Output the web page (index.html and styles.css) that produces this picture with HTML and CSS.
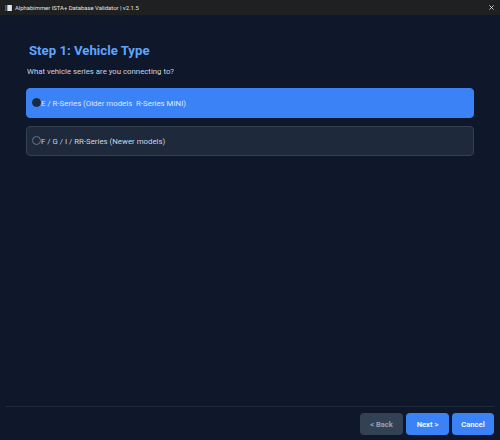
FILE: index.html
```html
<!DOCTYPE html>
<html lang="en">
<head>
<meta charset="utf-8">
<title>Alphabimmer ISTA+ Database Validator</title>
<link rel="stylesheet" href="styles.css">
</head>
<body>
<div class="window">
  <header class="titlebar">
    <svg class="app-icon" viewBox="0 0 9 8" aria-hidden="true"><rect width="9" height="8" fill="#dfe6ee"/><rect x="0" y="0" width="3" height="8" fill="#3b4656"/></svg>
    <span class="title-text">Alphabimmer ISTA+ Database Validator | v2.1.5</span>
    <svg class="close" viewBox="0 0 6 6" aria-hidden="true"><path d="M0.5 0.5L5.5 5.5M5.5 0.5L0.5 5.5" stroke="#e0e0e0" stroke-width="1" fill="none"/></svg>
  </header>
  <main class="content">
    <h1 class="heading">Step 1: Vehicle Type</h1>
    <p class="question">What vehicle series are you connecting to?</p>
    <div class="option selected"><span class="radio"></span><span>E / R-Series (Older models&nbsp; R-Series MINI)</span></div>
    <div class="option"><span class="radio"></span><span>F / G / I / RR-Series (Newer models)</span></div>
  </main>
  <footer class="footer">
    <button class="btn back">&lt; Back</button>
    <button class="btn primary">Next &gt;</button>
    <button class="btn primary">Cancel</button>
  </footer>
</div>
</body>
</html>
```
FILE: styles.css
```css
* { box-sizing: border-box; }
html, body { margin: 0; padding: 0; }
body { width: 500px; height: 440px; overflow: hidden; background: #0f172a; font-family: Roboto, "Noto Sans", sans-serif; }
.window { width: 500px; height: 440px; display: flex; flex-direction: column; background: #0f172a; }
.titlebar { height: 15px; flex: none; background: #1f2021; display: flex; align-items: center; padding: 0 5px; gap: 3px; color: #e4e4e4; font-size: 5.9px; }
.app-icon { width: 7px; height: 6px; flex: none; }
.title-text { flex: 1; white-space: nowrap; }
.close { width: 5px; height: 5px; margin-right: 1px; flex: none; }
.content { flex: 1; padding: 27px 26px 0; display: flex; flex-direction: column; }
.heading { margin: 0 0 0 3px; font-size: 13.2px; line-height: 18px; font-weight: 700; color: #60a5fa; }
.question { margin: 5px 0 9px 1px; font-size: 7.8px; line-height: 14px; color: #cbd5e1; }
.option { height: 30px; border-radius: 4px; margin-bottom: 8px; padding-left: 5px; display: flex; align-items: center; font-size: 7.85px; background: #1e293b; border: 1px solid #334155; color: #cbd5e1; }
.option.selected { background: #3b82f6; border-color: #3b82f6; color: #dbeafe; }
.radio { width: 9px; height: 9px; border-radius: 50%; flex: none; border: 1px solid #64748b; margin-top: -1px; }
.selected .radio { background: #1e293b; border-color: #1e293b; }
.footer { height: 34px; flex: none; margin: 0 6px 0 5px; border-top: 1px solid #1e293b; display: flex; justify-content: flex-end; align-items: flex-start; gap: 3px; padding-top: 6px; }
.btn { height: 22px; width: 43px; border: none; border-radius: 4px; font-family: inherit; font-size: 7.6px; font-weight: 700; padding: 0; }
.btn.back { background: #334155; color: #94a3b8; }
.btn.primary { background: #3b82f6; color: #f1f5f9; }
.btn:last-child { width: 42px; }
```
